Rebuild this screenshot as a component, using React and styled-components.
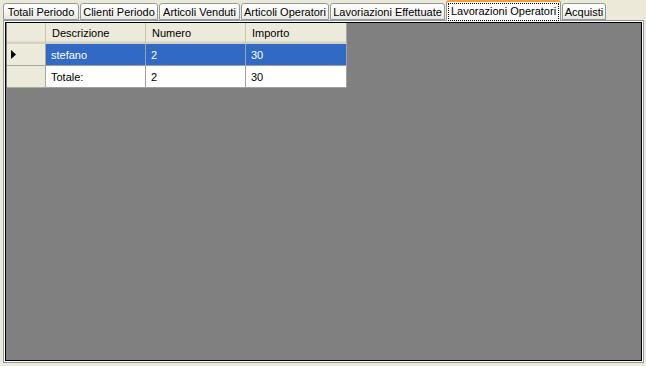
import React from "react";
import styled, { createGlobalStyle } from "styled-components";

const Global = createGlobalStyle`
  html, body {
    margin: 0;
    padding: 0;
    background: #ece9d8;
  }
  body {
    font-family: Tahoma, "Liberation Sans", Arial, sans-serif;
    font-size: 11px;
  }
`;

const Window = styled.div`
  width: 646px;
  height: 366px;
  background: #ece9d8;
  display: flex;
  flex-direction: column;
  box-sizing: border-box;
  padding: 0 2px 3px 3px;
`;

const TabStrip = styled.div`
  display: flex;
  align-items: flex-end;
  height: 20px;
  gap: 1px;
  position: relative;
  z-index: 1;
`;

const Tab = styled.div`
  box-sizing: border-box;
  width: ${(p) => p.$w}px;
  height: ${(p) => (p.$active ? 21 : 17)}px;
  margin-bottom: ${(p) => (p.$active ? -1 : 0)}px;
  border: 1px solid #919b9c;
  border-bottom: ${(p) => (p.$active ? "none" : "1px solid #919b9c")};
  border-top: ${(p) => (p.$active ? "2px solid #f1a137" : "1px solid #919b9c")};
  border-radius: 3px 3px 0 0;
  background: ${(p) =>
    p.$active ? "#fcfcfe" : "linear-gradient(#ffffff, #f3f2ee 70%, #e7e6df)"};
  display: flex;
  align-items: center;
  justify-content: center;
  padding-top: ${(p) => (p.$active ? 0 : 1)}px;
  color: #000;
  font-size: 11px;
  white-space: nowrap;
`;

const Focus = styled.span`
  border: 1px dotted #000;
  padding: 1px 2px 2px;
  line-height: 13px;
`;

const Panel = styled.div`
  flex: 1;
  box-sizing: border-box;
  border: 1px solid #919b9c;
  background: #fcfcfe;
  padding: 1px;
  display: flex;
`;

const GridView = styled.div`
  flex: 1;
  border: 1px solid #000;
  background: #808080;
  padding: 0 0 0 1px;
`;

const Table = styled.div`
  display: grid;
  grid-template-columns: 39px 100px 100px 101px;
  grid-template-rows: 21px 22px 22px;
  width: max-content;
`;

const HeadCell = styled.div`
  box-sizing: border-box;
  background: #ebeadb;
  border-right: 1px solid ${(p) => (p.$last ? "#aca899" : "#c7c5b2")};
  border-bottom: 2px solid #d6d2c2;
  box-shadow: inset 0 -1px 0 #e2decd;
  padding-left: 6px;
  display: flex;
  align-items: center;
  color: #000;
`;

const RowHead = styled.div`
  box-sizing: border-box;
  background: #ebeadb;
  border-right: 1px solid #aca899;
  border-bottom: 1px solid #aca899;
  display: flex;
  align-items: center;
  padding-left: 4px;
`;

const Cell = styled.div`
  box-sizing: border-box;
  background: ${(p) => (p.$selected ? "#316ac5" : "#ffffff")};
  color: ${(p) => (p.$selected ? "#ffffff" : "#000000")};
  border-right: 1px solid #a0a0a0;
  border-bottom: 1px solid #a0a0a0;
  padding-left: 5px;
  display: flex;
  align-items: center;
`;

const Arrow = () => (
  <svg width="5" height="9" viewBox="0 0 5 9">
    <path d="M0 0 L5 4.5 L0 9 Z" fill="#000" />
  </svg>
);

const tabs = [
  { label: "Totali Periodo", w: 76 },
  { label: "Clienti Periodo", w: 78 },
  { label: "Articoli Venduti", w: 81 },
  { label: "Articoli Operatori", w: 88 },
  { label: "Lavoriazioni Effettuate", w: 115 },
  { label: "Lavorazioni Operatori", w: 115, active: true },
  { label: "Acquisti", w: 44 },
];

const rows = [
  { cells: ["stefano", "2", "30"], selected: true },
  { cells: ["Totale:", "2", "30"] },
];

export default function App() {
  return (
    <>
      <Global />
      <Window>
        <TabStrip>
          {tabs.map((t) => (
            <Tab key={t.label} $w={t.w} $active={t.active}>
              {t.active ? <Focus>{t.label}</Focus> : t.label}
            </Tab>
          ))}
        </TabStrip>
        <Panel>
          <GridView>
            <Table>
              <HeadCell />
              <HeadCell>Descrizione</HeadCell>
              <HeadCell>Numero</HeadCell>
              <HeadCell $last>Importo</HeadCell>
              {rows.map((r, i) => (
                <React.Fragment key={i}>
                  <RowHead>{r.selected && <Arrow />}</RowHead>
                  {r.cells.map((c, j) => (
                    <Cell key={j} $selected={r.selected}>
                      {c}
                    </Cell>
                  ))}
                </React.Fragment>
              ))}
            </Table>
          </GridView>
        </Panel>
      </Window>
    </>
  );
}
